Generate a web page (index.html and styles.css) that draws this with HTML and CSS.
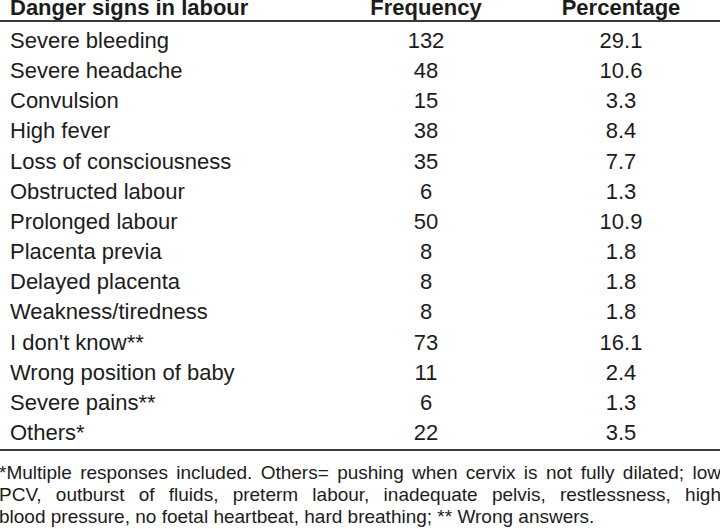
FILE: index.html
```html
<!DOCTYPE html>
<html>
<head>
<meta charset="utf-8">
<link rel="stylesheet" href="styles.css">
</head>
<body>
<div class="sheet">
  <div class="head">
    <div class="cell label">Danger signs in labour</div>
    <div class="cell num">Frequency</div>
    <div class="cell num">Percentage</div>
  </div>
  <div class="body">
    <div class="row"><div class="cell label">Severe bleeding</div><div class="cell num">132</div><div class="cell num">29.1</div></div>
    <div class="row"><div class="cell label">Severe headache</div><div class="cell num">48</div><div class="cell num">10.6</div></div>
    <div class="row"><div class="cell label">Convulsion</div><div class="cell num">15</div><div class="cell num">3.3</div></div>
    <div class="row"><div class="cell label">High fever</div><div class="cell num">38</div><div class="cell num">8.4</div></div>
    <div class="row"><div class="cell label">Loss of consciousness</div><div class="cell num">35</div><div class="cell num">7.7</div></div>
    <div class="row"><div class="cell label">Obstructed labour</div><div class="cell num">6</div><div class="cell num">1.3</div></div>
    <div class="row"><div class="cell label">Prolonged labour</div><div class="cell num">50</div><div class="cell num">10.9</div></div>
    <div class="row"><div class="cell label">Placenta previa</div><div class="cell num">8</div><div class="cell num">1.8</div></div>
    <div class="row"><div class="cell label">Delayed placenta</div><div class="cell num">8</div><div class="cell num">1.8</div></div>
    <div class="row"><div class="cell label">Weakness/tiredness</div><div class="cell num">8</div><div class="cell num">1.8</div></div>
    <div class="row"><div class="cell label">I don't know**</div><div class="cell num">73</div><div class="cell num">16.1</div></div>
    <div class="row"><div class="cell label">Wrong position of baby</div><div class="cell num">11</div><div class="cell num">2.4</div></div>
    <div class="row"><div class="cell label">Severe pains**</div><div class="cell num">6</div><div class="cell num">1.3</div></div>
    <div class="row"><div class="cell label">Others*</div><div class="cell num">22</div><div class="cell num">3.5</div></div>
  </div>
  <div class="note">
    <div class="line just">*Multiple responses included. Others= pushing when cervix is not fully dilated; low</div>
    <div class="line just">PCV, outburst of fluids, preterm labour, inadequate pelvis, restlessness, high</div>
    <div class="line">blood pressure, no foetal heartbeat, hard breathing; ** Wrong answers.</div>
  </div>
</div>
</body>
</html>
```

FILE: styles.css
```css
html, body {
  margin: 0;
  padding: 0;
  background: #ffffff;
}
body {
  width: 720px;
  height: 529px;
  overflow: hidden;
  font-family: "Liberation Sans", Arial, sans-serif;
  color: #1c1c1c;
}
.sheet {
  width: 720px;
}
.head, .row {
  display: grid;
  grid-template-columns: 330px 192px 198px;
}
.head {
  font-size: 22px;
  font-weight: bold;
  line-height: 16px;
  padding-bottom: 4px;
  border-bottom: 2px solid #3a3a3a;
}
.body {
  padding-top: 4px;
  padding-bottom: 1px;
  border-bottom: 2px solid #3a3a3a;
}
.row {
  font-size: 22px;
  line-height: 30.15px;
}
.cell.label {
  padding-left: 10px;
  white-space: nowrap;
}
.cell.num {
  text-align: center;
}
.note {
  margin-top: 11px;
  margin-left: -1px;
  width: 722px;
  font-size: 19px;
  line-height: 22px;
}
.line {
  white-space: nowrap;
}
.line.just {
  white-space: normal;
  text-align: justify;
  text-align-last: justify;
}
```
